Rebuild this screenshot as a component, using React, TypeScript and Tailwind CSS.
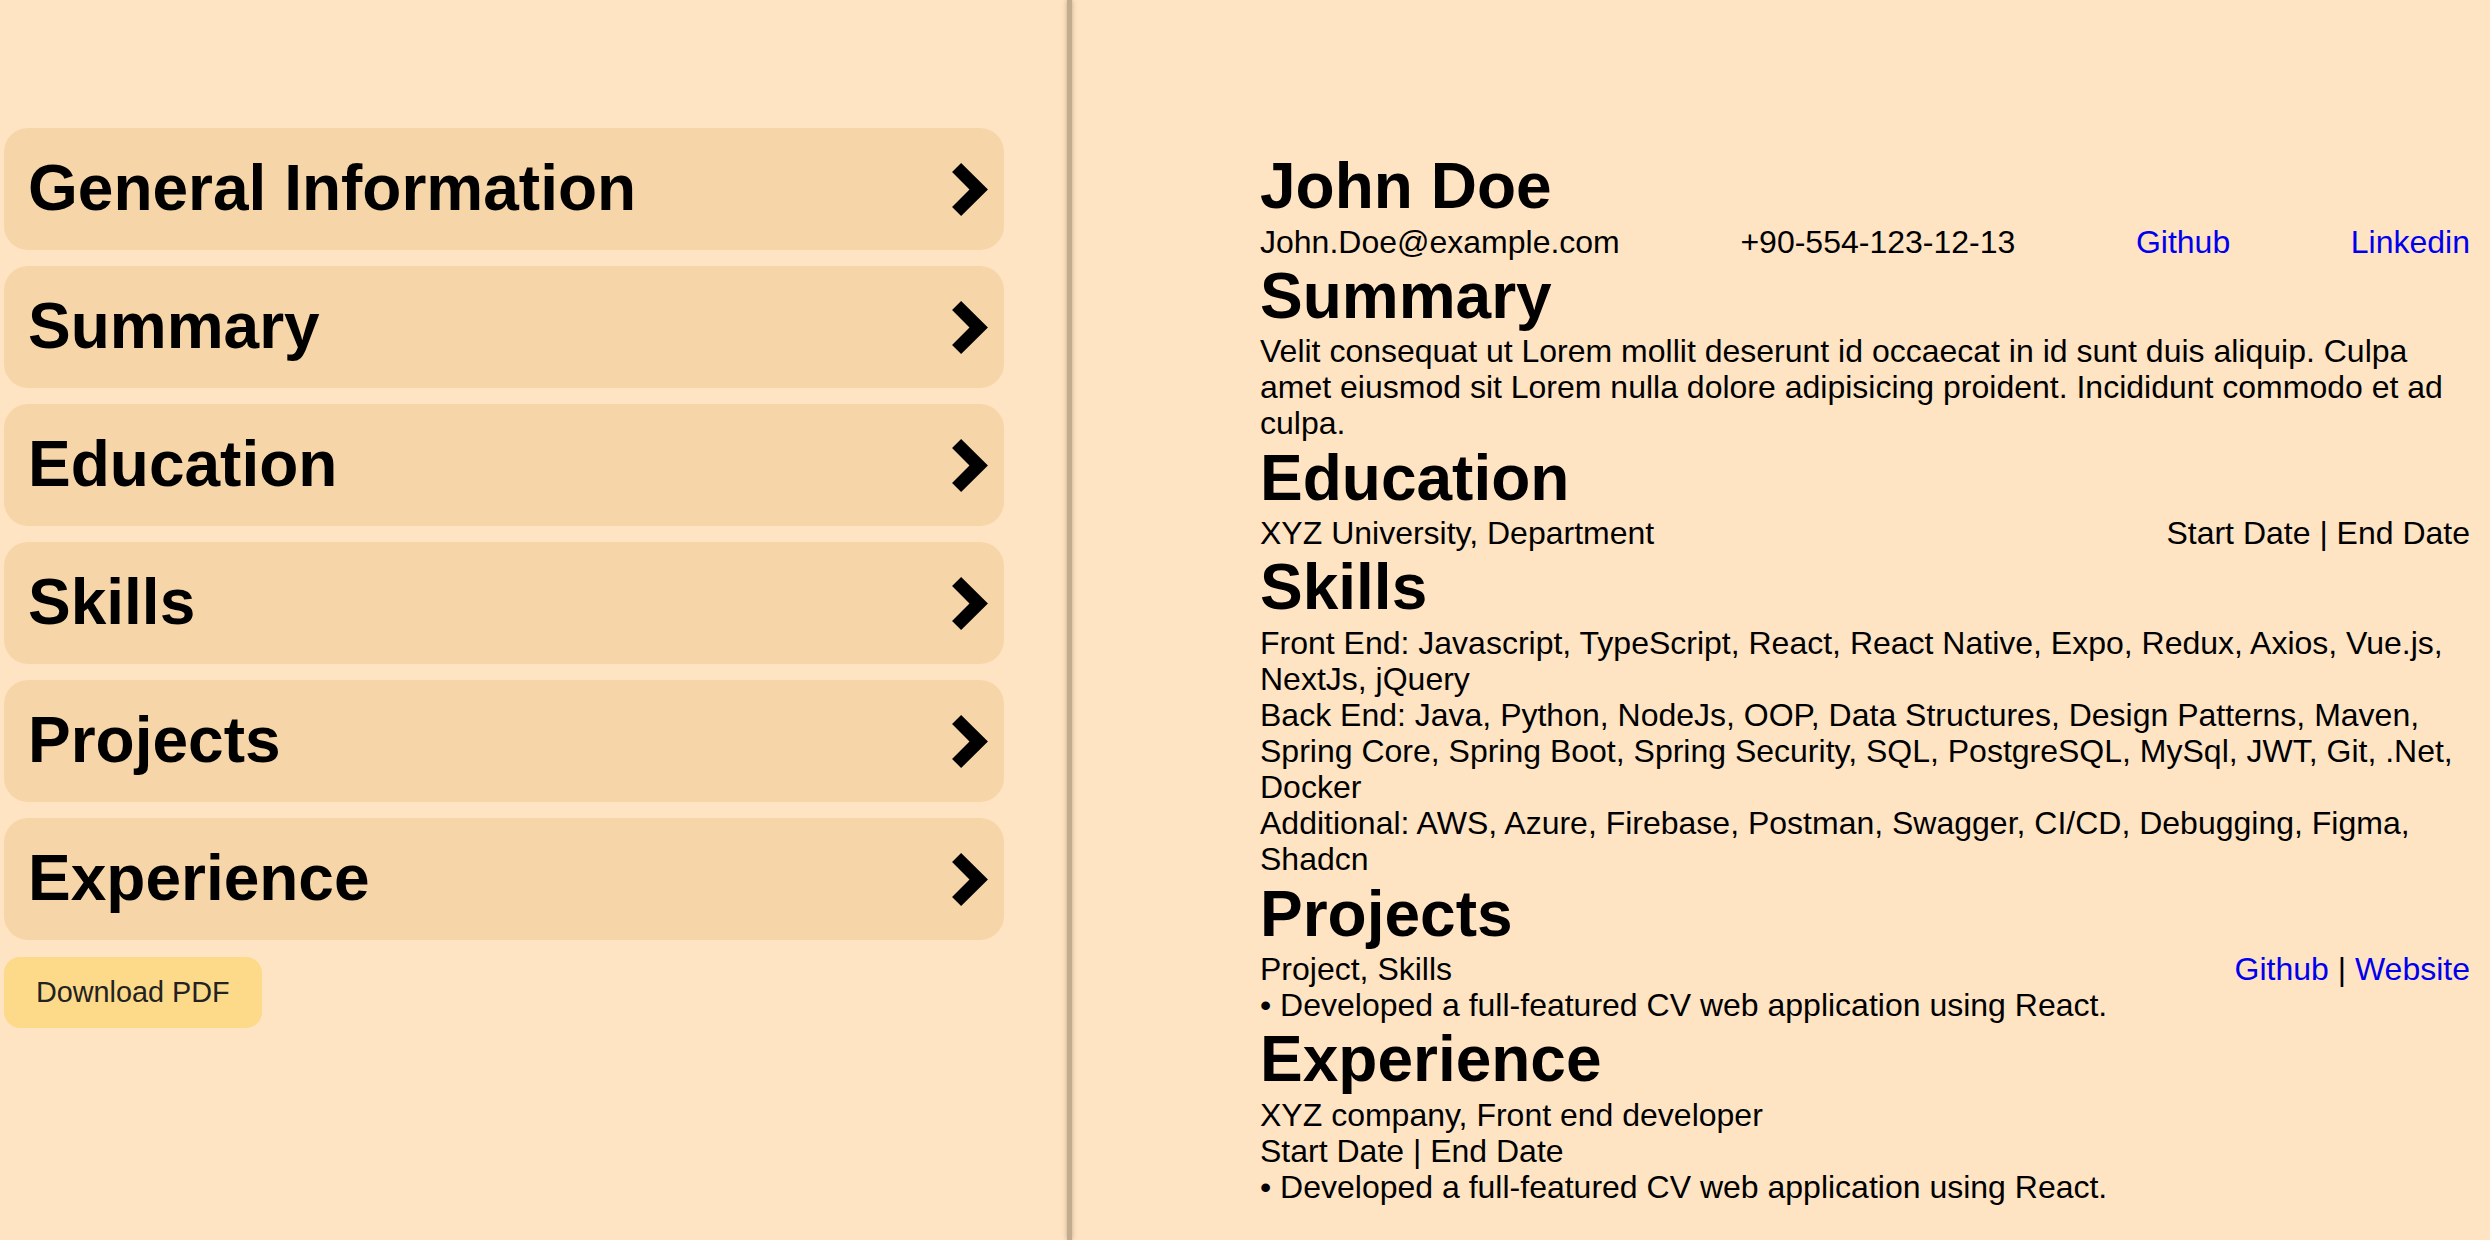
import React from "react";

const sections = ["General Information", "Summary", "Education", "Skills", "Projects", "Experience"];

function Chevron() {
  return (
    <svg width="36" height="53" viewBox="0 0 35.6 52.6" className="shrink-0">
      <polygon points="9,0 35.6,26.3 9,52.6 0,43.6 17.3,26.3 0,9" fill="#000" />
    </svg>
  );
}

const H = ({ children }: { children: React.ReactNode }) => (
  <h2 className="text-[64px] font-bold leading-[73.6px] text-black">{children}</h2>
);

const P = ({ children }: { children: React.ReactNode }) => (
  <p className="text-[32px] leading-[36.1px] text-black">{children}</p>
);

const A = ({ children }: { children: React.ReactNode }) => (
  <a href="#" className="text-[#0000ee]">{children}</a>
);

export default function App() {
  return (
    <div
      className="flex h-[1240px] w-full overflow-hidden bg-[#ffe4c4]"
      style={{ fontFamily: '"Liberation Sans", Arial, sans-serif' }}
    >
      <div className="w-[1067px] shrink-0 pl-[4px] pt-[128px]">
        <div className="flex w-[1000px] flex-col gap-[16px]">
          {sections.map((s) => (
            <div
              key={s}
              className="flex h-[122px] items-center justify-between rounded-[24px] bg-[#f6d6a8] pl-[24px] pr-[16px]"
            >
              <span className="text-[64px] font-bold leading-[73.6px] text-black">{s}</span>
              <Chevron />
            </div>
          ))}
        </div>
        <button className="mt-[17px] rounded-[16px] bg-[#fdd98a] px-[32px] py-[19px] text-[28.8px] leading-[1.15] text-[#222]">
          Download PDF
        </button>
      </div>
      <div className="w-[5px] shrink-0 bg-[#c3ab8e] shadow-[0_0_5px_rgba(120,90,50,0.45)]" />
      <div className="flex-1 pl-[188px] pr-[20px] pt-[150px]">
        <div className="w-[1210px]">
          <h1 className="text-[64px] font-bold leading-[73.6px] text-black">John Doe</h1>
          <div className="flex justify-between text-[32px] leading-[36.1px] text-black">
            <span>John.Doe@example.com</span>
            <span>+90-554-123-12-13</span>
            <A>Github</A>
            <A>Linkedin</A>
          </div>
          <H>Summary</H>
          <P>
            Velit consequat ut Lorem mollit deserunt id occaecat in id sunt duis aliquip. Culpa amet eiusmod sit
            Lorem nulla dolore adipisicing proident. Incididunt commodo et ad culpa.
          </P>
          <H>Education</H>
          <div className="flex justify-between text-[32px] leading-[36.1px] text-black">
            <span>XYZ University, Department</span>
            <span>Start Date | End Date</span>
          </div>
          <H>Skills</H>
          <P>Front End: Javascript, TypeScript, React, React Native, Expo, Redux, Axios, Vue.js, NextJs, jQuery</P>
          <P>
            Back End: Java, Python, NodeJs, OOP, Data Structures, Design Patterns, Maven, Spring Core, Spring Boot,
            Spring Security, SQL, PostgreSQL, MySql, JWT, Git, .Net, Docker
          </P>
          <P>Additional: AWS, Azure, Firebase, Postman, Swagger, CI/CD, Debugging, Figma, Shadcn</P>
          <H>Projects</H>
          <div className="flex justify-between text-[32px] leading-[36.1px] text-black">
            <span>Project, Skills</span>
            <span>
              <A>Github</A> | <A>Website</A>
            </span>
          </div>
          <P>• Developed a full-featured CV web application using React.</P>
          <H>Experience</H>
          <P>XYZ company, Front end developer</P>
          <P>Start Date | End Date</P>
          <P>• Developed a full-featured CV web application using React.</P>
        </div>
      </div>
    </div>
  );
}
